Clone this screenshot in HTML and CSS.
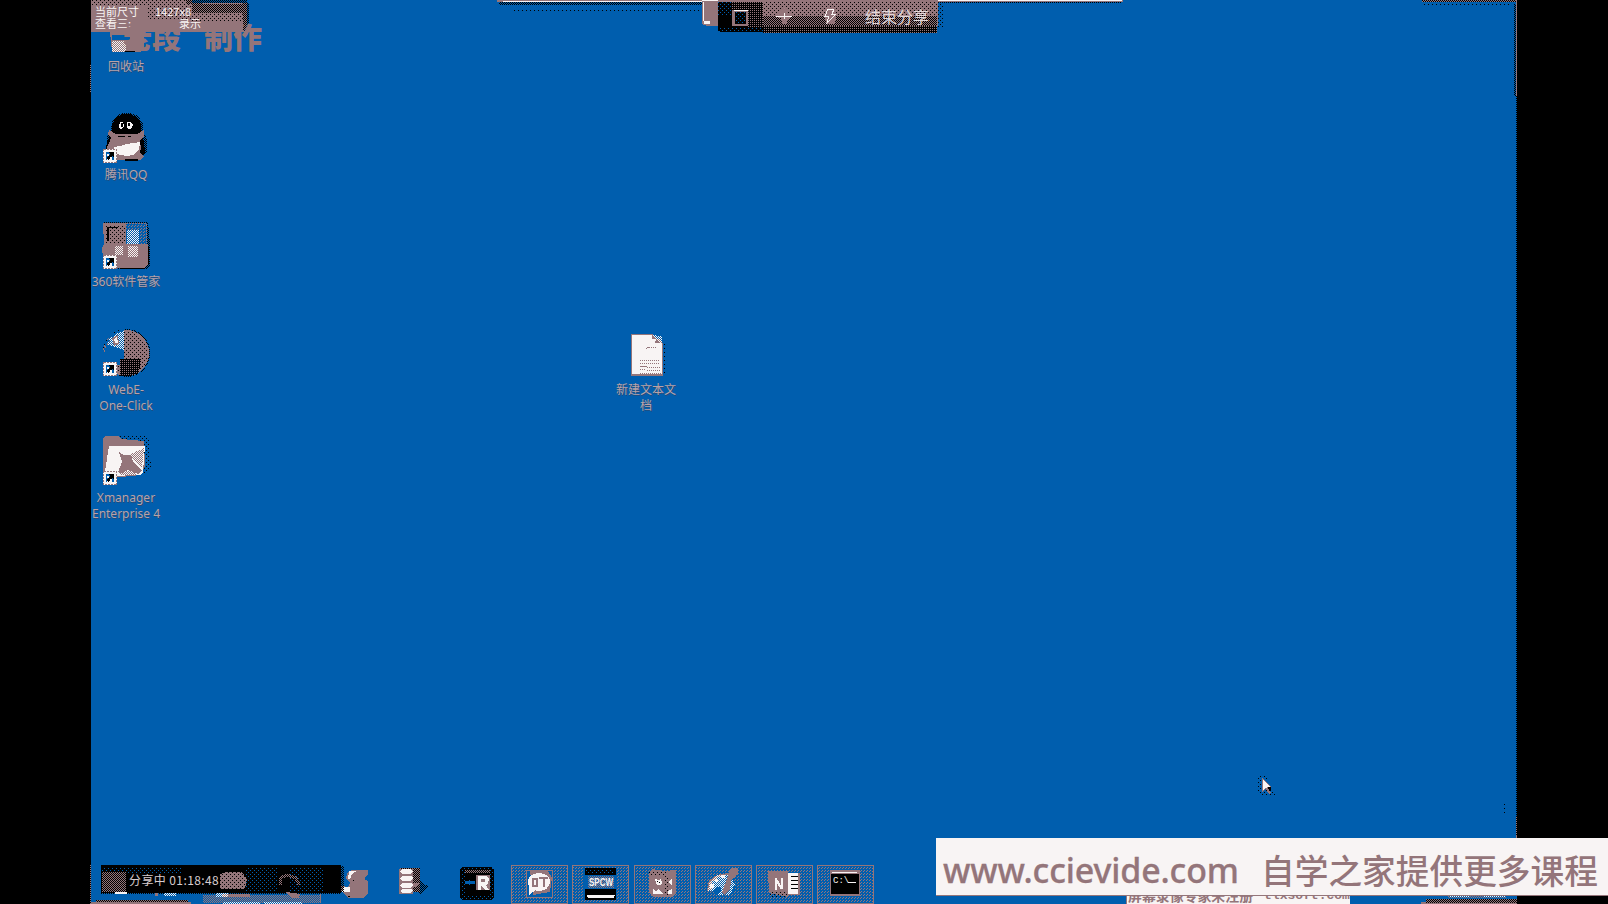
FILE: index.html
```html
<!DOCTYPE html>
<html lang="zh-CN">
<head>
<meta charset="utf-8">
<title>桌面</title>
<link rel="stylesheet" href="styles.css">
</head>
<body>
<svg class="defs" width="0" height="0">
  <defs>
    <pattern id="mk" width="2" height="2" patternUnits="userSpaceOnUse"><path fill="#94757a" d="M0 0h2v2h-2z"/><path fill="#000" d="M0 0h1v1h-1zM1 1h1v1h-1z"/></pattern>
    <pattern id="mk1" width="4" height="4" patternUnits="userSpaceOnUse"><path fill="#94757a" d="M0 0h4v4h-4z"/><path fill="#000" d="M0 0h1v1h-1zM2 2h1v1h-1z"/></pattern>
    <pattern id="mk3" width="2" height="2" patternUnits="userSpaceOnUse"><path fill="#000" d="M0 0h2v2h-2z"/><path fill="#94757a" d="M0 0h1v1h-1z"/></pattern>
    <pattern id="bk" width="2" height="2" patternUnits="userSpaceOnUse"><path fill="#000" d="M0 0h1v1h-1zM1 1h1v1h-1z"/></pattern>
    <pattern id="bk1" width="4" height="4" patternUnits="userSpaceOnUse"><path fill="#000" d="M0 0h1v1h-1zM2 2h1v1h-1z"/></pattern>
    <pattern id="kb" width="4" height="4" patternUnits="userSpaceOnUse"><path fill="#000" d="M0 0h4v4h-4z"/><path fill="#005eae" d="M0 0h1v1h-1zM2 2h1v1h-1z"/></pattern>
    <pattern id="mb" width="3" height="3" patternUnits="userSpaceOnUse"><path fill="#94757a" d="M0 0h1v1h-1zM2 1h1v1h-1z"/></pattern>
    <pattern id="mc" width="2" height="2" patternUnits="userSpaceOnUse"><path fill="#94757a" d="M0 0h1v1h-1zM1 1h1v1h-1z"/></pattern>
    <pattern id="wb" width="2" height="2" patternUnits="userSpaceOnUse"><path fill="#f8f4f4" d="M0 0h1v1h-1zM1 1h1v1h-1z"/></pattern>
    <pattern id="wm" width="2" height="2" patternUnits="userSpaceOnUse"><path fill="#94757a" d="M0 0h2v2h-2z"/><path fill="#f8f4f4" d="M0 0h1v1h-1zM1 1h1v1h-1z"/></pattern>
    <symbol id="shortcut" viewBox="0 0 14 14"><path fill="#f8f4f4" d="M0 0h14v14H0z"/><path fill="none" stroke="#94757a" stroke-dasharray="2 1" d="M.5.5h13v13H.5z"/><path fill="#005eae" d="M3 3h8v8H7v-2l2-2-1-1-4 5H3z"/><path fill="#000" d="M5 3h6v6L9 7l-4 4-1-3 3-3z"/><path fill="#f8f4f4" d="M4 5h2v2H4zM7 8h2v3H7z"/></symbol>
  </defs>
</svg>

<main class="desktop">
  <svg class="edges" width="1427" height="904" viewBox="90 0 1427 904">
    <path fill="#000" d="M90 0h1v904h-1z"/>
    <path fill="#94757a" d="M90 64h1v28h-1zM90 864h1v40h-1zM1516 0h1v96h-1zM1516 816h1v22h-1z"/>
    <path fill="url(#bk)" d="M90 0h1v904h-1zM1514 4h2v92h-2zM1516 96h1v740h-1z"/>
    <path fill="url(#mk)" d="M1422 0h94v2h-94z"/>
    <path fill="url(#bk1)" d="M1422 3h90v2h-90zM91 100h1v100h-1zM1504 802h1v14h-1z"/>
    <path fill="#94757a" d="M497 0h626v2h-626z"/><path fill="#f8f4f4" d="M503 1h214v1h-214zM937 0h185v1h-185z"/>
    <path fill="url(#bk)" d="M499 2h203v3h-203zM937 2h185v1h-185z"/>
    <path fill="url(#bk1)" d="M512 9h190v2h-190zM937 4h6v24h-6z"/>
  </svg>

  <div class="shortcut recycle">
    <svg width="38" height="22" viewBox="110 30 38 22"><path fill="#94757a" d="M113 31h34v17l-4 3h-28z"/><path fill="#005eae" d="M115 34h18v5h-18z"/><path fill="#f8f4f4" d="M116 41h7v2h5v7h-10z"/><path fill="url(#wm)" d="M115 40h14v11h-14z"/><path fill="#000" d="M128 50h10v1h-10z"/></svg>
    <span>回收站</span>
  </div>
  <section class="capture">
    <svg width="160" height="34" viewBox="91 0 160 34"><path fill="#94757a" d="M91 0h156v32h-156z"/><path fill="url(#mk1)" d="M91 0h101v6h-101zM148 6h50v14h-50zM192 12h55v9h-55z"/><path fill="url(#mk)" d="M192 4h52v9h-52z"/><path fill="#005eae" d="M192 0h55v3h-55z"/><path fill="url(#bk)" d="M186 0h61v4h-61zM243 3h6v28h-6z"/><path fill="#94757a" d="M203 3h40v1h-40z"/></svg>
    <p><b>当前尺寸</b><b>1427x8</b></p>
    <p><b>查看三:</b><b>录示</b></p>
  </section>
  <p class="author"><span>老段</span><span>制作</span></p>

  <div class="shortcut qq">
    <svg width="50" height="50" viewBox="101 112 50 50"><path fill="#000" d="M112 132v-9l5-7 6-3h7l7 3 4 7v9l3 8 1 11-6 7h-27l-6-7 1-11z"/><path fill="url(#bk)" d="M107 136l4-6 1-9 6-7 5-2h8l7 3 5 7v9l4 7v13l-5 6h-30l-6-7z"/><path fill="#94757a" d="M109 129l7 4h21l7-4v6l-4 5 1 8-1 3 4 5-4 3h-30l-4-10 5-12-3-4z"/><path fill="#f8f4f4" d="M119 125l1-4h3l1 4-2 3h-2zM127 121h4l2 3-2 4h-3l-1-3zM114 146l6-1 6-2 14-2-1 8-6 5-7 1-10-2z"/><path fill="#000" d="M121 122h2v4h-2zM128 122h2v3h-2zM118 135h7v1h-7zM128 135h3v1h-3zM125 158h13v2h-13z"/><use href="#shortcut" x="103" y="148" width="14" height="14"/></svg>
    <span>腾讯QQ</span>
  </div>
  <div class="shortcut manager">
    <svg width="50" height="50" viewBox="100 220 50 50"><path fill="url(#bk)" d="M104 222h44l2 22v21l-4 4h-42z"/><path fill="#005eae" d="M126 223h21v21h-21z"/><path fill="#94757a" d="M103 223h23v21h22v20l-4 4h-40l-2-20 2-4z"/><path fill="url(#bk1)" d="M105 225h20v18h-20z"/><path fill="#000" d="M107 227h11v1h-9v13h-2zM120 268h24v1h-24zM148 246h1v18h-1z"/><path fill="url(#mb)" d="M126 224h20v6h-20zM139 230h7v14h-7z"/><path fill="url(#wb)" d="M127 230h12v14h-12z"/><path fill="none" stroke="#94757a" stroke-dasharray="2 1" d="M126 223.500h20l.5 20"/><path fill="url(#wm)" d="M115 246h8v9h-8zM128 246h10v11h-10z"/><use href="#shortcut" x="103" y="255" width="14" height="14"/></svg>
    <span>360软件管家</span>
  </div>
  <div class="shortcut webex">
    <svg width="50" height="50" viewBox="101 328 50 50"><circle cx="126.500" cy="353" r="24" fill="url(#bk)"/><circle cx="126" cy="353" r="23" fill="#94757a"/><circle cx="126" cy="353" r="22" fill="url(#mk1)"/><path fill="#005eae" d="M124 329v48h-4v-12h-17v-13c2-14 11-22 21-23z"/><path fill="url(#wb)" d="M124 331v19l-18-6c4-7 10-11 18-13z"/><path fill="#94757a" d="M112 338l6-3 1 9-5 2z"/><path fill="#f8f4f4" d="M114 339l3-3 1 7h-3z"/><path fill="url(#mk3)" d="M120 359h21l-2 14-8 3h-11z"/><path fill="none" stroke="#94757a" stroke-dasharray="2 2" d="M104 352q1-6 6-11"/><use href="#shortcut" x="103" y="362" width="14" height="14"/></svg>
    <span>WebE-<br>One-Click</span>
  </div>
  <div class="shortcut xmanager">
    <svg width="50" height="50" viewBox="101 435 50 50"><path fill="url(#bk1)" d="M105 435h43l3 31-5 8h-38z"/><path fill="#94757a" d="M103 438l2-2h13l3 3 23 2 1 25-4 9-20 2-18-1z"/><path fill="#f8f4f4" d="M109 446h36l-2 26-3 3-30 1-5-5z"/><path fill="url(#wm)" d="M129 455l15-7-2 20zM119 471h17v4h-16z"/><path fill="#94757a" d="M119 452l5 3h7l2 6 9 10-4 3-10-4-6 3-4-1 4-10z"/><use href="#shortcut" x="103" y="471" width="14" height="14"/></svg>
    <span>Xmanager<br>Enterprise 4</span>
  </div>
  <div class="shortcut textfile">
    <svg width="50" height="50" viewBox="621 330 50 50"><path fill="#94757a" d="M631 334h21l11 9v33h-32z"/><path fill="#f8f4f4" d="M632 335h20v4h4l-1 4h6l1 2v29h-30z"/><path fill="url(#wb)" d="M652 335l10 9v-8z"/><path stroke="#94757a" stroke-dasharray="1 1" fill="none" d="M646 349l3-2h7M640 360.500h20M640 363.500h19M647 367.500h14M640 369.500h5M647 370.500h14M640 373.500h21"/><path stroke="#94757a" d="M640 366.500h7"/><path fill="url(#bk1)" d="M663 343h2v30h-2z"/></svg>
    <span>新建文本文<br>档</span>
  </div>

  <header class="share">
    <svg width="236" height="35" viewBox="702 0 236 35"><path fill="#94757a" d="M702 0h236v26h-236z"/><path fill="#005eae" d="M702 24l5 2h11v9h-16z"/><path fill="#f8f4f4" d="M703 2h1v19h-1zM704 21h6v3h-6zM702 0h16v1h-16z"/><path fill="url(#mk1)" d="M763 2h174v14h-174z"/><path fill="url(#mk)" d="M763 16h174v10h-174z"/><path fill="url(#mk3)" d="M763 26h174v7h-174z"/><path fill="#000" d="M718 2h45v29h-45z"/><path fill="url(#mk3)" d="M722 2h41v7h-41zM748 9h15v18h-15z"/><path fill="url(#kb)" d="M718 2h14v14h-14zM720 28h43v4h-43z"/><path fill="#94757a" d="M732 10h16v16h-16z"/><path fill="#000" d="M735 12h11v12h-11z"/><path fill="url(#kb)" d="M735 12h11v12h-11z"/><path fill="#f8f4f4" d="M734 10h14v1h-14z"/><path fill="#94757a" d="M782 7h4l2 6h4v4l-4 2-1 5h-4l-2-6-5-1v-4l5-1zM827 8h7l3 6-2 10h-8l-3-9z"/><path fill="#f8f4f4" d="M776 16h16v1h-16zM784 13h1v6h-1z"/><path fill="none" stroke="#f8f4f4" d="M834 9h-6l-3 7h4l-2 7 9-9h-4z"/></svg>
    <span>结束分享</span>
  </header>

  <svg class="cursor" width="22" height="22" viewBox="1257 775 22 22"><path fill="url(#bk1)" d="M1257 776h9l6 12 4 8h-10l-9-3z"/><path fill="#94757a" d="M1262 777l9 10-2 2 2 4-2 1-3-5-4 3z"/><path fill="#f8f4f4" d="M1263 779l7 8h-3l-1 1-3 2z"/><path fill="#000" d="M1268 787h3v4h-2z"/></svg>

  <footer class="taskbar">
    <svg class="shade" width="300" height="42" viewBox="90 862 300 42"><path fill="#000" d="M101 865h240v28h-240z"/><path fill="url(#kb)" d="M101 864h81v10h-81zM246 865h31v28h-31zM289 865h34v27h-34z"/><path fill="url(#bk)" d="M101 864h240v3h-240zM101 891h240v3h-240zM336 866h8v26h-8z"/><path fill="#005eae" d="M101 864h243v1h-243z"/><path fill="url(#mk)" d="M102 872h24v20h-24z"/><path fill="url(#mk1)" d="M220 874l7-2h15l5 7-2 10h-25z"/><path fill="none" stroke="url(#mk)" stroke-width="3" d="M280 885v-7l7-3 9 3 3 7"/><path fill="url(#mc)" d="M203 895h118v8h-118z"/><path fill="url(#mk)" d="M96 900h92v3h-92z"/><path fill="#94757a" d="M91 902h100v2h-100zM155 893h3v3h-3zM286 892l14 2-1 4h-8zM320 894h1v9h-1zM222 894h28v3h-28z"/><path fill="#f8f4f4" d="M115 892h12v2h-12z"/><path fill="url(#wb)" d="M164 893h12v3h-12zM216 893h12v4h-12zM223 902h37v2h-37zM264 902h38v2h-38z"/></svg>
    <div class="status">分享中 01:18:48</div>
    <div class="pinned">
      <svg width="30" height="32" viewBox="340 867 30 32"><path fill="#94757a" d="M347 873l5-3h16v5l-3 2v3l3 1v12l-5 5h-14l-8-7v-5l7 1 2-4-4-4z"/><path fill="#f8f4f4" d="M349 871h8l-5 3-2 5h-2zM344 887h6v5h-8z"/><path fill="#000" d="M353 880h1v1h-1zM348 896h2v1h-2z"/></svg>
      <svg width="32" height="32" viewBox="400 867 32 32"><path fill="url(#mk)" d="M401 868h20v24h-20z"/><path fill="url(#bk)" d="M413 882l5 2v-5l12 8-9 8-2-3h-6z"/><path fill="#94757a" d="M400 869h14v25h-14zM414 883h7l-3 4h-4z"/><path fill="#f8f4f4" d="M404 869h8l2 3-3 2h-8l-2-3zM404 876h8l2 2-3 3h-8l-2-3zM404 883h8l2 2-3 3h-8l-2-3zM404 889h8l2 2-3 2h-8l-2-2z"/></svg>
      <svg width="34" height="34" viewBox="460 867 34 34"><rect x="460" y="867" width="34" height="33" rx="4" fill="#000"/><path fill="none" stroke="url(#kb)" stroke-width="4" d="M463 870h28v27h-28z"/><path fill="url(#mk)" d="M465 870h25v3h-25z"/><path fill="#005eae" d="M465 881h3l2-2v2h5v3h-5v2l-2-2h-3z"/><path fill="#94757a" d="M476 875h14v15h-14z"/><path fill="#f8f4f4" fill-rule="evenodd" d="M478 876h9l2 3-1 5-2 1 3 5h-4l-3-4h-1v4h-3zM481 879v3h4v-3z"/></svg>
    </div>
    <nav class="tasks">
      <div class="task"><svg width="57" height="39" viewBox="511 865 57 39"><path class="tint" d="M512 866h55v36h-55z"/><path fill="#005eae" d="M526 871h26v26h-26z"/><path fill="none" stroke="#94757a" d="M526.500 870.500h26v27h-26z"/><path fill="#94757a" d="M530 871h18l4 7-2 14-17 3z"/><ellipse cx="539" cy="882" rx="11" ry="9" fill="#f8f4f4"/><path fill="#f8f4f4" d="M529 885v10l8-6z"/><path fill="none" stroke="#94757a" stroke-width="2" d="M534 879h3v7h-4v-7zM539 878h9M543.500 878v9"/></svg></div>
      <div class="task"><svg width="57" height="39" viewBox="572 865 57 39"><path class="tint" d="M573 866h55v36h-55z"/><path fill="#005eae" d="M584 868h32v32h-32z"/><path fill="#000" d="M585 868h31v7h-31zM585 889h31v11h-31z"/><path fill="url(#kb)" d="M585 869h29v5h-29z"/><path fill="url(#mc)" d="M588 876h26v12h-26z"/><path fill="#f8f4f4" d="M587 895h28l-1 3h-26z"/><text class="mini" x="589" y="886" textLength="24" lengthAdjust="spacingAndGlyphs">SPCW</text></svg></div>
      <div class="task"><svg width="57" height="39" viewBox="633 865 57 39"><path class="tint" d="M634 866h55v36h-55z"/><path fill="#94757a" d="M648 873l3-4 12 2 12-1v24l-4 3h-19l-4-5z"/><path fill="url(#bk1)" d="M648 871h17v4h-17zM664 875h3v20h-3z"/><path fill="#f8f4f4" d="M654 879l3 1 3-1 1 4-2 2h-3zM668 881l3-3v7l-3-2zM652 889l3 2 3-2 4 5h-10zM667 891l4-2v5h-4z"/><path fill="#000" d="M656 881h1v1h-1zM658 882h1v1h-1z"/></svg></div>
      <div class="task"><svg width="57" height="39" viewBox="695 865 57 39"><path class="tint" d="M696 866h55v36h-55z"/><path fill="#005eae" d="M712 882l8-8 14 3 1 12-6 6h-14z"/><path fill="none" stroke="#94757a" stroke-width="2" d="M708 891l2-10 8-5 10-2"/><path fill="url(#wb)" d="M708 891l2-10 8-6h11l6 9-5 11h-12l4-7-5-1-3 4z"/><path fill="#f8f4f4" d="M710 884h4v4h-4zM715 879h3v3h-3zM721 875h4v3h-4z"/><path fill="#94757a" d="M722 892l6-16 1-6 4-2h5v5l-7 7-1 10-6 5z"/></svg></div>
      <div class="task"><svg width="57" height="39" viewBox="756 865 57 39"><path class="tint" d="M757 866h55v36h-55z"/><path fill="#94757a" d="M768 871h20v26l-19-4zM788 873h12v22h-12z"/><path fill="#f8f4f4" d="M788 873h10v21h-10z"/><path stroke="#000" d="M791 876.500h7M791 880.500h7M791 884.500h7M791 888.500h7"/><path fill="none" stroke="#f8f4f4" stroke-width="2" d="M775.500 890v-12l6 11v-11"/><path fill="url(#bk1)" d="M769 892h18v5h-18z"/></svg></div>
      <div class="task"><svg width="57" height="39" viewBox="817 865 57 39"><path class="tint" d="M818 866h55v36h-55z"/><path fill="#94757a" d="M830 870h30v26h-30z"/><path fill="#000" d="M831 874h28v20h-28z"/><path fill="#f8f4f4" d="M832 872h25v1h-25zM848 882h8v1h-8z"/><text class="prompt" x="833" y="883">C:\</text></svg></div>
    </nav>
  </footer>
  <div class="recorder"><span>屏幕录像专家未注册</span><span class="url">tlxsoft.com</span></div>
  <svg class="tray" width="100" height="9" viewBox="1417 895 100 9"><path fill="#94757a" d="M1417 895h100v1h-100zM1421 902h96v2h-96z"/><path fill="url(#mk)" d="M1426 899h91v4h-91z"/><path fill="#005eae" d="M1448 896h58v3h-58z"/><path fill="url(#mc)" d="M1448 896h58v2h-58z"/><path fill="url(#wb)" d="M1450 896h20v1h-20zM1484 896h22v1h-22z"/></svg>
</main>

<aside class="banner"><span class="site">www.ccievide.com</span><span class="slogan">自学之家提供更多课程</span></aside>
</body>
</html>
```
FILE: styles.css
```css
:root {
  --blue: #005eae;
  --mauve: #94757a;
  --paper: #f8f4f4;
}

* { box-sizing: border-box; }

body {
  margin: 0;
  width: 1608px;
  height: 904px;
  overflow: hidden;
  position: relative;
  background: #000;
  font-family: "Liberation Sans", "Noto Sans CJK SC", sans-serif;
}

svg { display: block; shape-rendering: crispEdges; }
p { margin: 0; }
.defs { position: absolute; }

.desktop {
  position: relative;
  width: 1427px;
  height: 904px;
  margin-left: 90px;
  overflow: hidden;
  background: var(--blue);
}

.edges { position: absolute; inset: 0; }

/* icons on the desktop canvas */
.shortcut {
  position: absolute;
  left: -4px;
  width: 80px;
  display: flex;
  flex-direction: column;
  align-items: center;
  gap: 5px;
  color: #b8a2a8;
  font: 12px/16px "Noto Sans", "Noto Sans CJK SC", sans-serif;
  text-align: center;
  white-space: nowrap;
}
.shortcut span { text-shadow: 1px 1px 0 #234c7c; }
.recycle { top: 31px; gap: 6px; }
.qq { top: 113px; gap: 4px; }
.manager { top: 220px; gap: 4px; }
.manager svg { margin-right: 2px; }
.webex { top: 328px; gap: 4px; }
.xmanager { top: 435px; gap: 5px; }
.textfile { left: 516px; top: 330px; gap: 2px; }

.capture {
  position: absolute;
  left: 1px;
  top: 0;
  color: var(--paper);
  font: 11px/12px "Noto Sans CJK SC", sans-serif;
}
.capture svg { position: absolute; left: 0; top: 0; }
.capture p {
  position: relative;
  display: flex;
  gap: 16px;
  padding-left: 4px;
}
.capture p:first-of-type { padding-top: 5px; }
.capture p:last-of-type { gap: 48px; }
.capture b { font-weight: 400; }

.author {
  position: absolute;
  left: 33px;
  top: 17px;
  display: flex;
  gap: 23px;
  color: var(--mauve);
  font: 900 29px/38px "Noto Sans CJK SC", sans-serif;
}

.share {
  position: absolute;
  left: 612px;
  top: 0;
}
.share span {
  position: absolute;
  left: 163px;
  top: 4px;
  color: #e2d8da;
  font: 16px/24px "Noto Sans CJK SC", sans-serif;
  white-space: nowrap;
}

.cursor { position: absolute; left: 1167px; top: 775px; }

.taskbar {
  position: absolute;
  left: 0;
  bottom: 0;
  width: 1427px;
  height: 42px;
  display: flex;
  align-items: flex-start;
}
.shade { position: absolute; left: 0; top: 0; }
.status {
  position: relative;
  width: 250px;
  padding: 9px 0 0 39px;
  color: #d8cccf;
  font: 12px/18px "Noto Sans CJK SC", sans-serif;
  letter-spacing: .4px;
}
.pinned {
  display: flex;
  gap: 29px;
  padding-top: 5px;
  width: 171px;
}
.tasks {
  display: flex;
  gap: 4.300px;
  padding-top: 3px;
}
.task { outline: 1px solid var(--mauve); outline-offset: -1px; }
.tint { fill: url(#mb); }
.mini { fill: var(--paper); font: bold 10px "Liberation Sans", sans-serif; }
.prompt { fill: var(--paper); font: 9px "Liberation Mono", monospace; }

.recorder {
  position: absolute;
  left: 1036px;
  top: 895px;
  width: 224px;
  height: 9px;
  overflow: hidden;
  display: flex;
  gap: 11px;
  padding-left: 1px;
  background: var(--paper);
  border-left: 1px solid var(--mauve);
  color: var(--mauve);
  font: bold 13.900px "Noto Sans CJK SC", sans-serif;
  line-height: 1px;
  white-space: nowrap;
}
.recorder .url { font: bold 13px "Liberation Mono", monospace; line-height: 1px; }
.tray { position: absolute; right: 0; bottom: 0; }

.banner {
  position: absolute;
  left: 936px;
  top: 838px;
  width: 672px;
  height: 58px;
  display: flex;
  align-items: center;
  padding: 7px 0 0 7px;
  background: var(--paper);
  border-bottom: 1px solid var(--mauve);
  color: var(--mauve);
  white-space: nowrap;
}
.site {
  width: 318px;
  font: 500 34px/50px "Noto Sans", sans-serif;
  letter-spacing: -.15px;
  -webkit-text-stroke: .3px var(--mauve);
}
.slogan { font: 500 33.700px/50px "Noto Sans CJK SC", sans-serif; }
```
